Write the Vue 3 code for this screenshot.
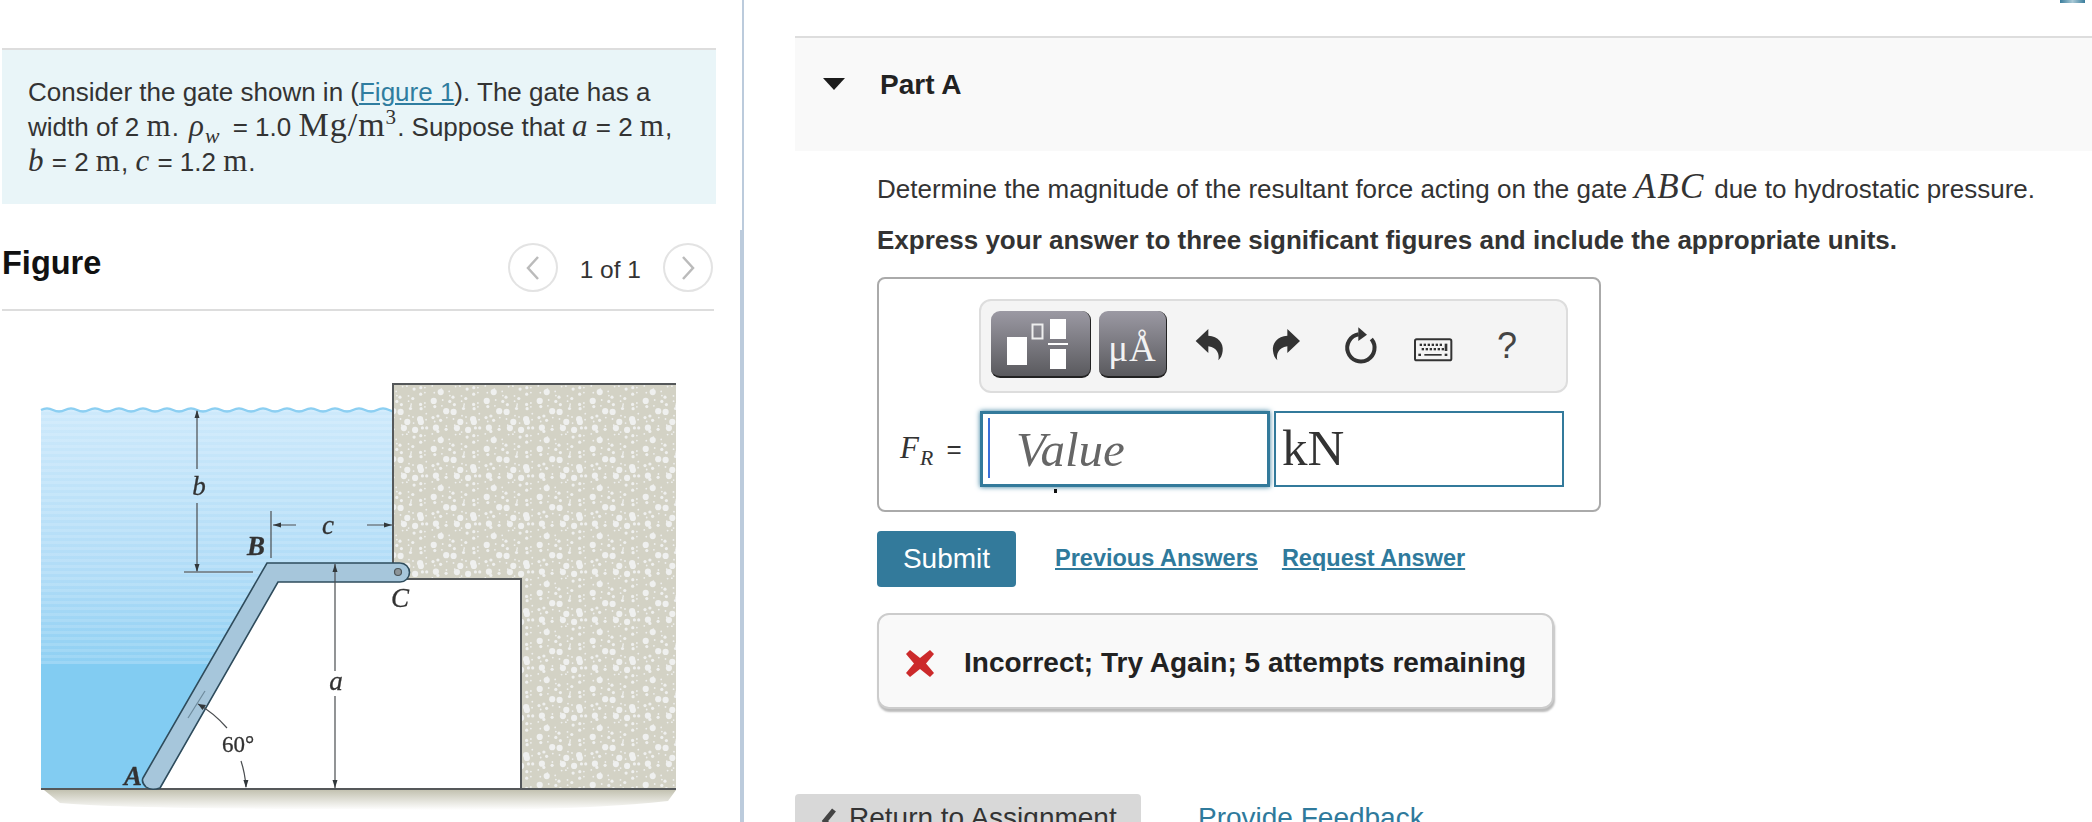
<script setup>
const speck = []
let seed = 23
const rnd = () => {
  seed = (seed * 16807) % 2147483647
  return seed / 2147483647
}
for (let row = 0; row < 7; row++) {
  for (let col = 0; col < 8; col++) {
    const pick = rnd()
    const r = pick > 0.88 ? 3.1 : pick > 0.55 ? 1.6 : 0.9
    const cx = col * 6.6 + 3.3 + (rnd() - 0.5) * 6.6
    const cy = row * 6.85 + 3.4 + (rnd() - 0.5) * 6.8
    speck.push({
      x: +Math.min(53 - r, Math.max(r, cx)).toFixed(1),
      y: +Math.min(48 - r, Math.max(r, cy)).toFixed(1),
      r
    })
  }
}
let wave = 'M41 409'
for (let x = 41; x < 393; x += 24) {
  wave += ` q6 -3 12 0 t12 0`
}
</script>

<template>
  <div class="page">
    <section class="left">
      <div class="question">
        Consider the gate shown in (<a class="qlink">Figure 1</a>). The gate has a<br />
        width of 2 <span class="m">m</span>. <i class="m rho">ρ<sub>w</sub></i> = 1.0 <span class="m big">Mg/m<sup>3</sup></span>. Suppose that <i class="m">a</i> = 2 <span class="m">m</span>,<br />
        <i class="m">b</i> = 2 <span class="m">m</span>, <i class="m">c</i> = 1.2 <span class="m">m</span>.
      </div>

      <div class="fig-head">
        <h2 class="fig-title">Figure</h2>
        <div class="pager">
          <span class="circle">
            <svg width="20" height="28" viewBox="0 0 20 28"><path d="M15 3 L5 14 L15 25" fill="none" stroke="#bbb" stroke-width="2.5" /></svg>
          </span>
          <span class="count">1 of 1</span>
          <span class="circle">
            <svg width="20" height="28" viewBox="0 0 20 28"><path d="M5 3 L15 14 L5 25" fill="none" stroke="#bbb" stroke-width="2.5" /></svg>
          </span>
        </div>
      </div>

      <svg class="figure" width="738" height="512" viewBox="2 310 738 512">
        <defs>
          <pattern id="conc" width="53" height="48" patternUnits="userSpaceOnUse">
            <rect width="53" height="48" fill="#d3d2c5" />
            <circle v-for="(d, i) in speck" :key="i" :cx="d.x" :cy="d.y" :r="d.r" fill="#eff0ef" />
          </pattern>
          <linearGradient id="water" x1="0" y1="0" x2="0" y2="1">
            <stop offset="0" stop-color="#cde9fb" />
            <stop offset="0.65" stop-color="#b0dcf7" />
            <stop offset="1" stop-color="#8fd0f3" />
          </linearGradient>
          <pattern id="stripes" width="6" height="6" patternUnits="userSpaceOnUse">
            <rect width="6" height="3" fill="#ffffff" opacity="0.13" />
          </pattern>
          <linearGradient id="ground" x1="0" y1="0" x2="0" y2="1">
            <stop offset="0" stop-color="#c3c2b1" />
            <stop offset="1" stop-color="#ffffff" />
          </linearGradient>
          <filter id="soft" x="-2%" y="-2%" width="104%" height="104%">
            <feGaussianBlur stdDeviation="0.6" />
          </filter>
        </defs>
        <g filter="url(#soft)">
          <path d="M44 789 H676 L668 800 Q560 812 360 808 Q120 808 60 802 Z" fill="url(#ground)" />
          <rect x="41" y="409" width="352" height="254" fill="url(#water)" />
          <rect x="41" y="409" width="352" height="254" fill="url(#stripes)" />
          <rect x="41" y="663" width="200" height="125" fill="#82ccf2" />
          <path d="M278 581 L160 788 H521 V578 H393 Z" fill="#ffffff" />
          <path :d="wave" fill="none" stroke="#8ccff2" stroke-width="2.5" />
          <path d="M393 383 H676 V788 H521 V578 H393 Z" fill="url(#conc)" />
          <path d="M676 383 H393 V562" fill="none" stroke="#55585a" stroke-width="2" />
          <path d="M400 578 H521 V788" fill="none" stroke="#55585a" stroke-width="2" />
          <path d="M41 788 H676" fill="none" stroke="#55585a" stroke-width="2" />

          <path d="M267 562 H400 A9.5 9.5 0 0 1 400 581 H278 L160 787 Q151 790 146 786 Q141 781 143 777 Z" fill="#a6c6db" stroke="#2f4c5c" stroke-width="1.6" />
          <circle cx="398" cy="571" r="3.5" fill="#8c9499" stroke="#4c5559" stroke-width="1.2" />

          <g fill="none" stroke="#4a4d50" stroke-width="1.2">
            <path d="M197 410 V468 M197 502 V570" />
            <path d="M184 571 H253" stroke="#6b7277" stroke-width="1.6" />
            <path d="M271 510 V557" />
            <path d="M273 524 H296 M367 524 H392" />
            <path d="M335 563 V670 M335 695 V787" />
            <path d="M188 717 L205 690" stroke="#6d8a9c" />
            <path d="M198 703 Q214 712 227 727" />
            <path d="M241 760 Q245 772 246 786" />
          </g>
          <g fill="#33383b">
            <path d="M197 409 l-2.5 8 h5 Z M197 571 l-2.5 -8 h5 Z" />
            <path d="M273 524 l8 -2.5 v5 Z M392 524 l-8 -2.5 v5 Z" />
            <path d="M335 563 l-2.5 8 h5 Z M335 787 l-2.5 -8 h5 Z" />
            <path d="M198 703 l8 1 -3.5 5 Z M246 787 l-2.6 -8 h5 Z" />
          </g>
          <g class="lbl">
            <text x="199" y="494" text-anchor="middle">b</text>
            <text x="256" y="554" text-anchor="middle" font-weight="bold">B</text>
            <text x="328" y="533" text-anchor="middle">c</text>
            <text x="336" y="689" text-anchor="middle">a</text>
            <text x="400" y="606" text-anchor="middle">C</text>
            <text x="133" y="784" text-anchor="middle" font-weight="bold">A</text>
            <text class="deg" x="238" y="751" text-anchor="middle">60°</text>
          </g>
        </g>
      </svg>
    </section>

    <div class="divider">
      <div class="div-top"></div>
      <div class="div-bot"></div>
    </div>

    <section class="right">
      <div class="corner"></div>
      <header class="part">
        <svg class="tri" width="22" height="12" viewBox="0 0 22 12"><path d="M0 0 H22 L11 12 Z" fill="#1c1c1c" /></svg>
        <h2 class="part-title">Part A</h2>
      </header>

      <div class="body">
        <p class="prompt">Determine the magnitude of the resultant force acting on the gate <i class="m abc">ABC</i> due to hydrostatic pressure.</p>
        <p class="instr">Express your answer to three significant figures and include the appropriate units.</p>

        <div class="answer">
          <div class="toolbar">
            <button class="tbtn wide">
              <svg width="100" height="67" viewBox="992 311 100 67">
                <rect x="1008" y="337" width="20" height="28" fill="#fff" />
                <rect x="1033.5" y="324.5" width="10" height="14" fill="none" stroke="#eee" stroke-width="2" />
                <rect x="1051" y="319" width="16" height="20" fill="#fff" />
                <rect x="1049" y="343" width="20" height="2" fill="#fff" />
                <rect x="1051" y="349" width="16" height="20" fill="#fff" />
              </svg>
            </button>
            <button class="tbtn narrow">μÅ</button>
            <svg class="ic i1" width="60" height="65" viewBox="0 0 180 195">
              <path d="M50 78 L88 42 V62 C118 64 134 84 131 108 C130 120 125 130 118 136 C122 120 116 98 88 94 V114 Z" fill="#333" />
            </svg>
            <svg class="ic i2" width="60" height="65" viewBox="234 0 180 195">
              <path d="M363 78 L325 42 V62 C295 64 279 84 282 108 C283 120 288 130 295 136 C291 120 297 98 325 94 V114 Z" fill="#333" />
            </svg>
            <svg class="ic i3" width="60" height="65" viewBox="450 0 180 195">
              <path d="M539 58 A41 41 0 1 0 577 72" fill="none" stroke="#333" stroke-width="12" />
              <path d="M538 37 L564 59 L538 78 Z" fill="#333" />
            </svg>
            <svg class="ic i4" width="60" height="65" viewBox="672 0 180 195">
              <rect x="708" y="73" width="109" height="63" rx="5" fill="none" stroke="#333" stroke-width="6" />
              <g fill="#333">
                <rect v-for="n in 6" :key="'a' + n" :x="710 + n * 12" y="86" width="7" height="7" />
                <rect v-for="n in 6" :key="'b' + n" :x="716 + n * 12" y="99" width="7" height="7" />
                <rect x="718" y="116" width="8" height="7" />
                <rect x="736" y="117" width="52" height="5" />
                <rect x="797" y="116" width="8" height="7" />
                <rect x="797" y="86" width="8" height="22" />
              </g>
            </svg>
            <span class="ic i5">?</span>
          </div>

          <div class="entry">
            <span class="eq-label"><i class="m fr">F<sub>R</sub></i> =</span>
            <div class="field value">
              <span class="caret"></span>
              <span class="ph">Value</span>
              <span class="dot"></span>
            </div>
            <div class="field unit">kN</div>
          </div>
        </div>

        <div class="actions">
          <button class="submit">Submit</button>
          <a class="action-link first">Previous Answers</a>
          <a class="action-link">Request Answer</a>
        </div>

        <div class="feedback">
          <svg class="x" width="28" height="27" viewBox="0 0 28 27">
            <path d="M4 0 L14 8 L24 0 L28 4 L20 13.5 L28 23 L24 27 L14 19 L4 27 L0 23 L8 13.5 L0 4 Z" fill="#cc2a2b" />
          </svg>
          <span class="fb-text">Incorrect; Try Again; 5 attempts remaining</span>
        </div>
      </div>

      <div class="foot">
        <button class="ret">
          <svg class="chev" width="16" height="26" viewBox="0 0 16 26"><path d="M13 2 L4 13 L13 24" fill="none" stroke="#444" stroke-width="5" /></svg>
          <span>Return to Assignment</span>
        </button>
        <a class="provide">Provide Feedback</a>
      </div>
    </section>
  </div>
</template>

<style>
html, body { margin: 0; overflow: hidden; background: #fff; }
</style>

<style scoped>
.page {
  display: flex;
  width: 2092px;
  height: 822px;
  overflow: hidden;
  font-family: "Liberation Sans", Arial, sans-serif;
  color: #333;
  font-size: 26px;
}
.left { width: 738px; padding-left: 2px; flex: none; }
.question {
  margin-top: 48px;
  width: 714px;
  height: 156px;
  border-top: 2px solid #ddd;
  background: #e9f5f8;
  box-sizing: border-box;
  padding: 25px 0 0 26px;
  line-height: 35px;
  font-size: 26px;
  white-space: nowrap;
}
.m { font-family: "Liberation Serif", serif; font-size: 31px; line-height: 0; letter-spacing: 1px; }
.rho { margin: 0 5px 0 3px; }
.big { font-size: 34px; }
.m sub { font-size: 70%; line-height: 0; }
.m sup { font-size: 62%; line-height: 0; }
.qlink { color: #2f7da0; text-decoration: underline; }
.fig-head {
  margin-top: 39px;
  width: 712px;
  display: flex;
  justify-content: space-between;
  padding-bottom: 16px;
  border-bottom: 2px solid #ddd;
}
.fig-title { margin: 0; font-size: 32.5px; line-height: 40px; color: #111; }
.pager { display: flex; align-items: flex-start; gap: 22px; margin-right: 1px; }
.circle {
  width: 50px;
  height: 49px;
  box-sizing: border-box;
  border: 2px solid #e3e3e3;
  border-radius: 50%;
  display: flex;
  align-items: center;
  justify-content: center;
}
.count { line-height: 46px; margin-top: 4px; font-size: 24.5px; }
.figure { display: block; }
.lbl text { font-family: "Liberation Serif", serif; font-style: italic; font-size: 27px; fill: #333; stroke: #333; stroke-width: 0.3px; }
.lbl .deg { font-style: normal; font-size: 23px; }

.divider { width: 4px; flex: none; display: flex; flex-direction: column; }
.div-top { height: 230px; width: 2px; margin-left: 2px; background: #bccbdc; }
.div-bot { flex: 1; background: #bccbdc; }

.right { flex: 1; padding-left: 51px; position: relative; min-width: 0; }
.corner { position: absolute; right: 7px; top: 0; width: 25px; height: 3px; background: linear-gradient(90deg, #3a7d9c, #a9c9d6 50%, #3a7d9c); }
.part {
  margin-top: 36px;
  height: 83px;
  border-top: 2px solid #ddd;
  background: #f9f9f9;
  display: flex;
  align-items: flex-start;
  padding: 30px 0 0 28px;
  gap: 35px;
}
.tri { margin-top: 10px; flex: none; }
.part-title { margin: 0; font-size: 28px; line-height: 34px; color: #222; }
.body { padding-left: 82px; }
.prompt, .instr { margin: 0; line-height: 34px; white-space: nowrap; }
.prompt { margin-top: 21px; }
.abc { font-size: 35px; line-height: 0; letter-spacing: 1.5px; margin-right: 2px; }
.instr { margin-top: 17px; font-weight: bold; }
.answer {
  margin-top: 20px;
  width: 724px;
  height: 235px;
  box-sizing: border-box;
  border: 2px solid #aaa;
  border-radius: 8px;
  padding: 20px 0 0 0;
}
.toolbar {
  margin-left: 100px;
  width: 589px;
  height: 94px;
  box-sizing: border-box;
  background: #f4f4f4;
  border: 2px solid #ddd;
  border-radius: 12px;
  display: flex;
  align-items: flex-start;
  padding: 10px 0 0 10px;
}
.tbtn {
  height: 67px;
  padding: 0;
  border: none;
  border-right: 1px solid #222;
  border-bottom: 2px solid #222;
  border-radius: 9px;
  background: linear-gradient(#9b99a3, #5a5a5e);
  color: #f2f2f2;
  box-sizing: border-box;
  flex: none;
  overflow: hidden;
}
.tbtn svg { display: block; }
.wide { width: 100px; }
.narrow {
  width: 68px;
  margin-left: 8px;
  font-family: "Liberation Serif", serif;
  font-size: 37px;
  line-height: 60px;
  padding-top: 8px;
  letter-spacing: 1px;
}
.ic { flex: none; margin-top: 4px; display: block; }
.i1 { margin-left: 12px; }
.i2 { margin-left: 18px; }
.i3 { margin-left: 12px; }
.i4 { margin-left: 14px; }
.i5 { margin-left: 14px; width: 60px; text-align: center; font-size: 36px; line-height: 62px; color: #444; }
.entry { display: flex; align-items: center; margin-top: 18px; padding-left: 21px; }
.eq-label { width: 80px; flex: none; font-size: 26px; white-space: nowrap; }
.fr { font-size: 31px; margin-right: 5px; }
.field {
  height: 76px;
  box-sizing: border-box;
  flex: none;
  font-family: "Liberation Serif", serif;
  background: #fff;
}
.value {
  width: 290px;
  border: 3px solid #337a9b;
  box-shadow: 0 0 5px #337a9b;
  position: relative;
  display: flex;
  align-items: center;
  padding-left: 33px;
}
.caret { position: absolute; left: 5px; top: 4px; width: 2px; height: 60px; background: #3a6fd8; }
.ph { font-style: italic; font-size: 49px; color: #666; }
.dot { position: absolute; left: 71px; bottom: -9px; width: 3px; height: 4px; background: #111; }
.unit {
  width: 290px;
  margin-left: 4px;
  border: 2px solid #337a9b;
  font-size: 51px;
  line-height: 70px;
  padding-left: 6px;
  color: #333;
}
.actions { display: flex; align-items: center; margin-top: 19px; }
.submit {
  width: 139px;
  height: 56px;
  border: none;
  border-radius: 4px;
  background: #337a9b;
  color: #fff;
  font: 28px "Liberation Sans", Arial, sans-serif;
  padding: 0;
}
.action-link { color: #2f7a9c; font-weight: bold; text-decoration: underline; font-size: 23.5px; margin-left: 24px; margin-top: -2px; }
.action-link.first { margin-left: 39px; }
.feedback {
  margin-top: 26px;
  width: 677px;
  height: 96px;
  box-sizing: border-box;
  background: #f9f9f9;
  border: 2px solid #ccc;
  border-radius: 12px;
  box-shadow: 1px 3px 2px #bbb;
  display: flex;
  align-items: center;
  padding: 4px 0 0 27px;
}
.x { flex: none; }
.fb-text { margin-left: 30px; font-weight: bold; color: #222; white-space: nowrap; font-size: 28px; }
.foot { display: flex; align-items: flex-start; margin-top: 85px; }
.ret {
  width: 346px;
  height: 60px;
  border: none;
  border-radius: 4px 4px 0 0;
  background: #d8d8d8;
  color: #333;
  font: 28px "Liberation Sans", Arial, sans-serif;
  padding: 8px 0 0 26px;
  display: flex;
  align-items: flex-start;
  box-sizing: border-box;
  flex: none;
}
.chev { margin-top: 6px; flex: none; }
.ret span { margin-left: 12px; white-space: nowrap; }
.provide { margin-left: 57px; margin-top: 8px; color: #2f7a9c; font-size: 28px; }
</style>
